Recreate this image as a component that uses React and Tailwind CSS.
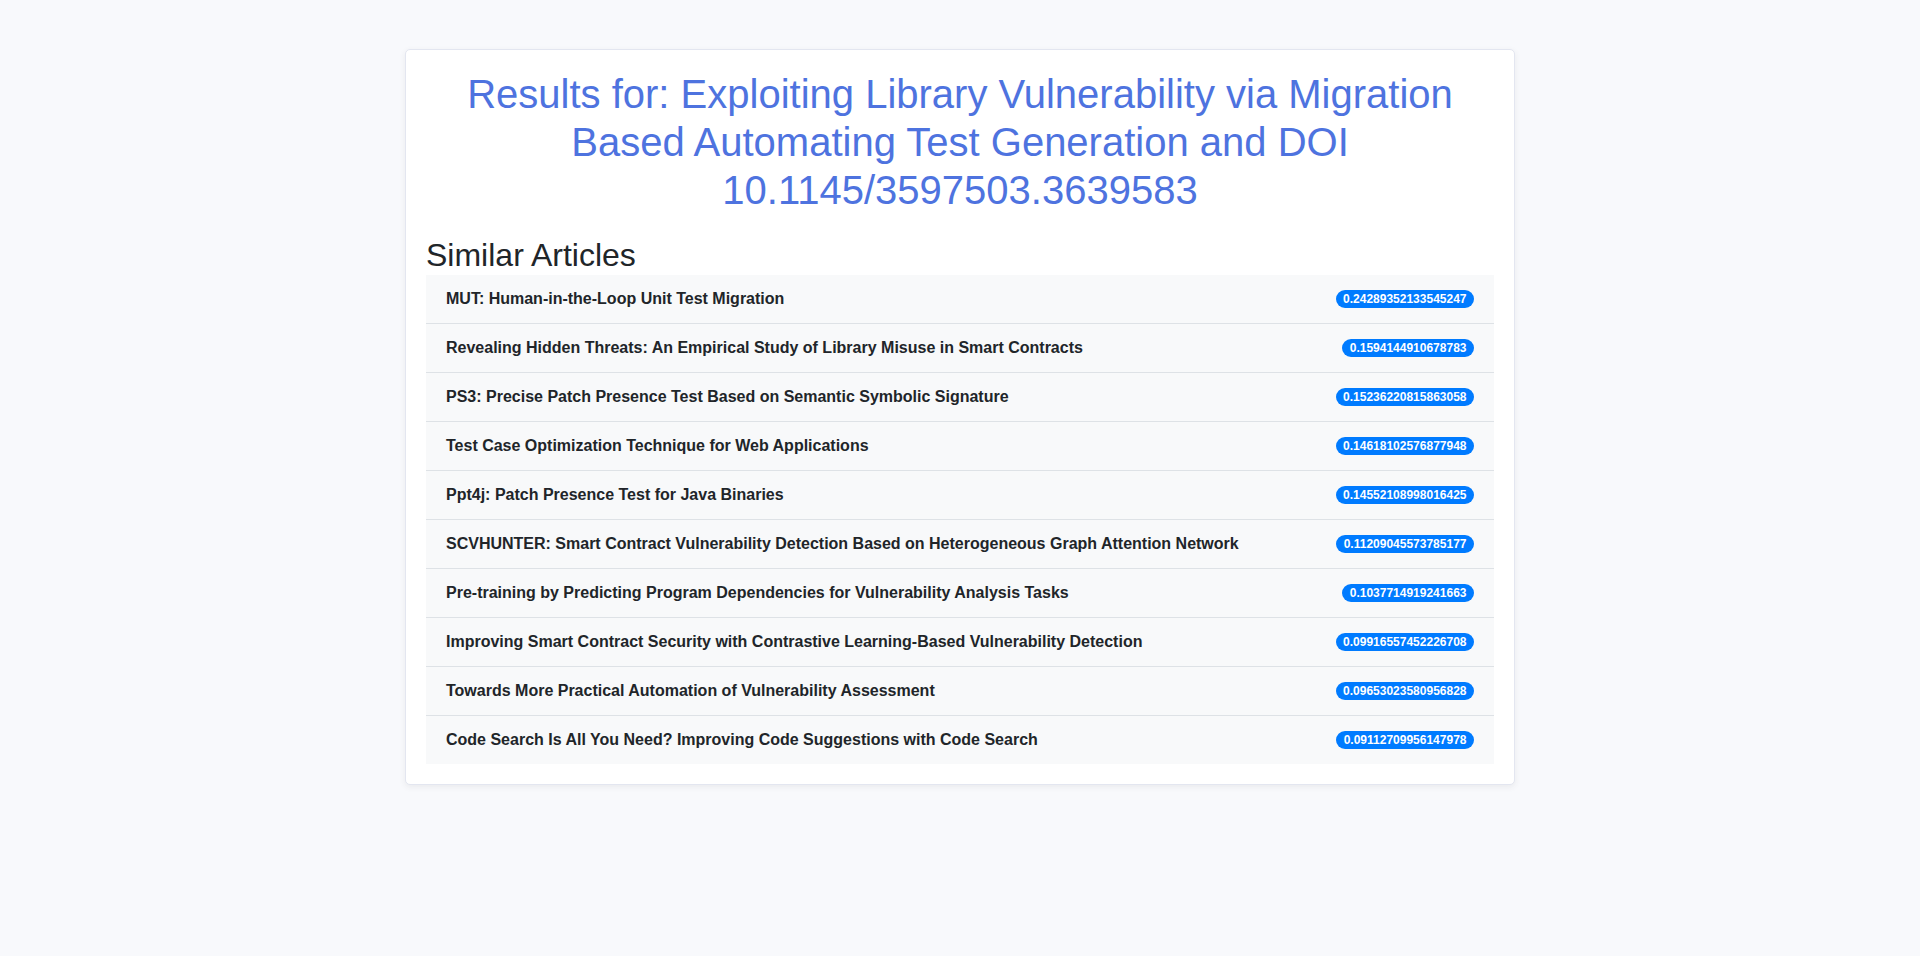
import React from "react";

const items = [
  ["MUT: Human-in-the-Loop Unit Test Migration", "0.24289352133545247"],
  ["Revealing Hidden Threats: An Empirical Study of Library Misuse in Smart Contracts", "0.1594144910678783"],
  ["PS3: Precise Patch Presence Test Based on Semantic Symbolic Signature", "0.15236220815863058"],
  ["Test Case Optimization Technique for Web Applications", "0.14618102576877948"],
  ["Ppt4j: Patch Presence Test for Java Binaries", "0.14552108998016425"],
  ["SCVHUNTER: Smart Contract Vulnerability Detection Based on Heterogeneous Graph Attention Network", "0.11209045573785177"],
  ["Pre-training by Predicting Program Dependencies for Vulnerability Analysis Tasks", "0.1037714919241663"],
  ["Improving Smart Contract Security with Contrastive Learning-Based Vulnerability Detection", "0.09916557452226708"],
  ["Towards More Practical Automation of Vulnerability Assessment", "0.09653023580956828"],
  ["Code Search Is All You Need? Improving Code Suggestions with Code Search", "0.09112709956147978"],
];

export default function App() {
  return (
    <div
      className="min-h-[956px] w-full bg-[#f8f9fc] pt-[49px]"
      style={{ fontFamily: '"Liberation Sans", Arial, sans-serif' }}
    >
      <div className="mx-auto w-[1110px] rounded-[5px] border border-[#e3e6f0] bg-white p-5 shadow-[0_2px_6px_rgba(58,59,69,0.08)]">
        <h1 className="mb-2 text-center text-[40px] leading-[48px] font-normal text-[#4e73df]">
          Results for: Exploiting Library Vulnerability via Migration
          <br />
          Based Automating Test Generation and DOI
          <br />
          10.1145/3597503.3639583
        </h1>
        <h2 className="mt-[22px] text-[32px] leading-[38px] font-normal text-[#212529]">
          Similar Articles
        </h2>
        <ul className="mt-[1px] flex flex-col">
          {items.map(([title, score], i) => (
            <li
              key={i}
              className={
                "flex h-[48px] items-center justify-between bg-[#f8f9fa] px-5 " +
                (i < items.length - 1 ? "box-content border-b border-[#dee2e6]" : "")
              }
            >
              <span className="text-[16px] leading-6 font-bold text-[#212529]">{title}</span>
              <span className="rounded-full bg-[#007bff] px-[7.5px] pt-[3px] pb-[3px] text-[12px] leading-[12px] font-bold text-white">
                {score}
              </span>
            </li>
          ))}
        </ul>
      </div>
    </div>
  );
}
